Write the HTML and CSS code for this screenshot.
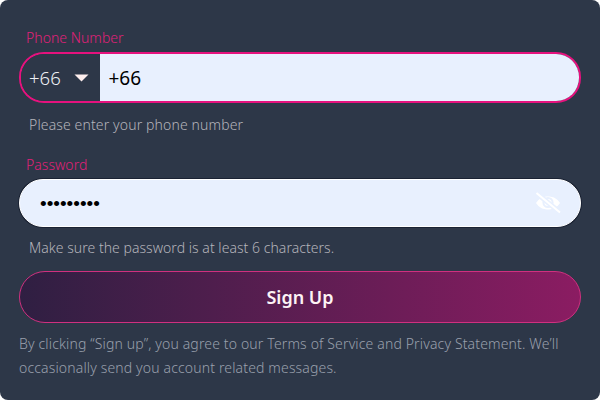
FILE: index.html
```html
<!DOCTYPE html>
<html lang="en">
<head>
<meta charset="utf-8">
<title>Sign Up</title>
<link rel="stylesheet" href="styles.css">
</head>
<body>
<form class="card">
  <label class="label label-phone">Phone Number</label>
  <div class="phone-row">
    <div class="code"><span class="code-num">+66</span><svg class="caret" width="15" height="8" viewBox="0 0 15 8"><path d="M0.5 0.5H14.5L7.5 7.5Z" fill="#fdeeee"/></svg></div>
    <div class="phone-value">+66</div>
  </div>
  <p class="hint hint-phone">Please enter your phone number</p>
  <label class="label label-pass">Password</label>
  <div class="pass-row">
    <span class="dots">•••••••••</span>
    <svg class="eye" width="26" height="22" viewBox="0 0 26 22">
      <path d="M1 11C4 6.5 8 4.5 13 4.5S22 6.5 25 11C22 15.5 18 17.5 13 17.5S4 15.5 1 11Z" fill="#fff"/>
      <circle cx="13" cy="10.5" r="4.6" fill="none" stroke="#e8f0fe" stroke-width="2"/>
      <path d="M2 1.5L25 20.5" stroke="#e8f0fe" stroke-width="5"/>
      <path d="M1.5 1L25 20.5" stroke="#fff" stroke-width="2"/>
    </svg>
  </div>
  <p class="hint hint-pass">Make sure the password is at least 6 characters.</p>
  <button class="submit" type="button">Sign Up</button>
  <p class="terms">By clicking “Sign up”, you agree to our Terms of Service and Privacy Statement. We’ll occasionally send you account related messages.</p>
</form>
</body>
</html>
```
FILE: styles.css
```css
* { box-sizing: border-box; }
html, body { margin: 0; padding: 0; background: #fff; }
body { width: 600px; height: 400px; overflow: hidden; font-family: "Noto Sans", "Open Sans", sans-serif; font-weight: 300; }
.card {
  width: 600px; height: 400px; background: #2d3748; border-radius: 8px;
  padding: 28px 19px 0; display: flex; flex-direction: column;
}
.label { display: block; margin-left: 7px; color: #e01f78; font-size: 14px; line-height: 20px; letter-spacing: 0.03px; }
.phone-row {
  margin-top: 4px; height: 51px; display: flex; border: 2px solid #e6127e; border-radius: 25px; overflow: hidden;
}
.code {
  width: 79px; display: flex; align-items: center; padding-left: 8px;
  color: #eef0f4; font-size: 18.5px; background: #2d3748;
}
.caret { margin-left: 13px; }
.phone-value {
  flex: 1; background: #e8f0fe; color: #000; font-size: 19px; font-weight: 400; display: flex; align-items: center; padding-left: 8.5px;
}
.hint { margin: 0 0 0 10px; color: #b5b4bb; font-size: 14px; line-height: 20px; letter-spacing: 0.13px; }
.hint-phone { margin-top: 12px; }
.label-pass { margin-top: 20px; }
.pass-row {
  margin-top: 4px; height: 48px; background: #e8f0fe; border: 1px solid #fff; border-radius: 24px;
  display: flex; align-items: center; justify-content: space-between; padding: 0 19px 0 20px;
  box-shadow: 0 0 0 1px #1a2233;
}
.dots { color: #000; font-size: 19px; letter-spacing: 0; line-height: 1; font-family: "Liberation Sans", sans-serif; }
.eye { display: block; }
.hint-pass { margin-top: 11px; letter-spacing: 0.04px; }
.submit {
  margin-top: 13px; height: 52px; width: 100%; border: 1px solid #d0307f; border-radius: 26px;
  background: linear-gradient(90deg, #2f1f42 0%, #8b1c62 100%);
  color: #fdf3f5; font-family: inherit; font-size: 18px; font-weight: 600; padding: 0;
}
.terms { margin: 9px 0 0; color: #9aa0ad; font-size: 14px; line-height: 24px; letter-spacing: 0.15px; }
```
